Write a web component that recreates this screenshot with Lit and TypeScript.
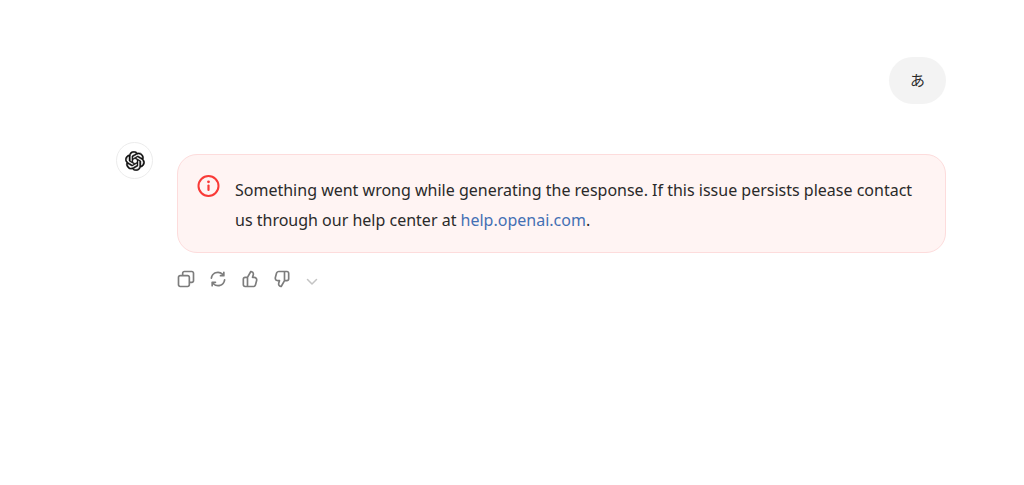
import { LitElement, html, css, svg } from "lit";
import { customElement } from "lit/decorators.js";

const LOGO =
  "M37.532 16.87a9.963 9.963 0 0 0-.856-8.184 10.078 10.078 0 0 0-10.855-4.835A9.964 9.964 0 0 0 18.306.5a10.079 10.079 0 0 0-9.614 6.977 9.967 9.967 0 0 0-6.664 4.834 10.08 10.08 0 0 0 1.24 11.817 9.965 9.965 0 0 0 .856 8.185 10.079 10.079 0 0 0 10.855 4.835 9.965 9.965 0 0 0 7.516 3.35 10.078 10.078 0 0 0 9.617-6.981 9.967 9.967 0 0 0 6.663-4.834 10.079 10.079 0 0 0-1.243-11.813ZM22.498 37.886a7.474 7.474 0 0 1-4.799-1.735c.061-.033.168-.091.237-.134l7.964-4.6a1.294 1.294 0 0 0 .655-1.134V19.054l3.366 1.944a.12.12 0 0 1 .066.092v9.299a7.505 7.505 0 0 1-7.49 7.496ZM6.392 31.006a7.471 7.471 0 0 1-.894-5.023c.06.036.162.099.237.141l7.964 4.6a1.297 1.297 0 0 0 1.308 0l9.724-5.614v3.888a.12.12 0 0 1-.048.103l-8.051 4.649a7.504 7.504 0 0 1-10.24-2.744ZM4.297 13.62A7.469 7.469 0 0 1 8.2 10.333c0 .068-.004.19-.004.274v9.201a1.294 1.294 0 0 0 .654 1.132l9.723 5.614-3.366 1.944a.12.12 0 0 1-.114.01L7.04 23.856a7.504 7.504 0 0 1-2.743-10.237Zm27.658 6.437-9.724-5.615 3.367-1.943a.121.121 0 0 1 .113-.01l8.052 4.648a7.498 7.498 0 0 1-1.158 13.528v-9.476a1.293 1.293 0 0 0-.65-1.132Zm3.35-5.043c-.059-.037-.162-.099-.236-.141l-7.965-4.6a1.298 1.298 0 0 0-1.308 0l-9.723 5.614v-3.888a.12.12 0 0 1 .048-.103l8.05-4.645a7.497 7.497 0 0 1 11.135 7.763Zm-21.063 6.929-3.367-1.944a.12.12 0 0 1-.065-.092v-9.299a7.497 7.497 0 0 1 12.293-5.756 6.94 6.94 0 0 0-.236.134l-7.965 4.6a1.294 1.294 0 0 0-.654 1.132l-.006 11.225Zm1.829-3.943 4.33-2.501 4.332 2.5v5l-4.331 2.5-4.331-2.5V18Z";

const COPY =
  "M7 5C7 3.343 8.343 2 10 2H19C20.657 2 22 3.343 22 5V14C22 15.657 20.657 17 19 17H17V19C17 20.657 15.657 22 14 22H5C3.343 22 2 20.657 2 19V10C2 8.343 3.343 7 5 7H7V5ZM9 7H14C15.657 7 17 8.343 17 10V15H19C19.552 15 20 14.552 20 14V5C20 4.448 19.552 4 19 4H10C9.448 4 9 4.448 9 5V7ZM5 9C4.448 9 4 9.448 4 10V19C4 19.552 4.448 20 5 20H14C14.552 20 15 19.552 15 19V10C15 9.448 14.552 9 14 9H5Z";
const REFRESH =
  "M3.07 10.876C3.623 6.436 7.41 3 12 3a9.1 9.1 0 0 1 6.012 2.254V4a1 1 0 1 1 2 0v4a1 1 0 0 1-1 1H15a1 1 0 1 1 0-2h1.957A7.1 7.1 0 0 0 12 5a7 7 0 0 0-6.946 6.124 1 1 0 1 1-1.984-.248Zm16.992 1.132a1 1 0 0 1 .868 1.116C20.377 17.564 16.59 21 12 21a9.1 9.1 0 0 1-6-2.254V20a1 1 0 1 1-2 0v-4a1 1 0 0 1 1-1h4a1 1 0 1 1 0 2H7.043A7.1 7.1 0 0 0 12 19a7 7 0 0 0 6.946-6.124 1 1 0 0 1 1.116-.868Z";
const THUMB =
  "M12.132 2.504C12.332 2.153 12.724 1.958 13.124 2.008L13.578 2.064C16.045 2.373 17.636 4.834 16.905 7.21L16.354 9H17.072C19.71 9 21.625 11.508 20.931 14.053L19.568 19.053C19.093 20.793 17.512 22 15.709 22H6C4.343 22 3 20.657 3 19V12C3 10.343 4.343 9 6 9H8.42L12.132 2.504ZM10 20H15.709C16.611 20 17.401 19.396 17.638 18.526L19.002 13.526C19.349 12.254 18.391 11 17.072 11H15C14.683 11 14.384 10.849 14.196 10.594C14.007 10.339 13.951 10.009 14.044 9.706L14.993 6.622C15.338 5.5 14.648 4.34 13.532 4.085L10 10.266V20ZM8 11V20H6C5.448 20 5 19.552 5 19V12C5 11.448 5.448 11 6 11H8Z";

const actions = [
  { label: "Copy", icon: svg`<path fill-rule="evenodd" d=${COPY} />` },
  { label: "Regenerate", icon: svg`<path d=${REFRESH} />` },
  { label: "Good response", icon: svg`<path fill-rule="evenodd" d=${THUMB} />` },
  {
    label: "Bad response",
    icon: svg`<path fill-rule="evenodd" transform="rotate(180 12 12)" d=${THUMB} />`,
  },
];

@customElement("app-root")
export class AppRoot extends LitElement {
  static styles = css`
    :host {
      display: block;
      min-height: 100vh;
      box-sizing: border-box;
      padding: 57px 78px 40px 116px;
      background: #fff;
      color: #2a2a2a;
      font-family: "Segoe UI", "Noto Sans", "Noto Sans CJK JP", sans-serif;
      font-size: 16px;
      line-height: 30px;
    }
    svg {
      display: block;
      fill: currentColor;
    }
    .thread {
      display: flex;
      flex-direction: column;
      gap: 38px;
    }
    .bubble {
      align-self: flex-end;
      padding: 8px 21px 9px;
      border-radius: 24px;
      background: #f3f3f3;
      font-family: "Noto Sans CJK JP", sans-serif;
      font-size: 15px;
    }
    .reply {
      display: flex;
      align-items: flex-start;
      gap: 24px;
    }
    .avatar {
      display: grid;
      place-items: center;
      flex: none;
      box-sizing: border-box;
      width: 37px;
      height: 37px;
      border: 1px solid #ececec;
      border-radius: 50%;
      color: #0d0d0d;
    }
    .logo {
      stroke: currentColor;
      stroke-width: 1;
    }
    .content {
      flex: 1;
      min-width: 0;
      padding-top: 12px;
    }
    .error {
      display: flex;
      align-items: flex-start;
      gap: 14px;
      padding: 19px 19px 17px;
      border: 1px solid #fddcdc;
      border-radius: 20px;
      background: #fff4f3;
    }
    .info {
      flex: none;
      color: #f93a37;
    }
    .message {
      margin: 0;
      padding-top: 1px;
    }
    .link {
      color: #4470b4;
      text-decoration: none;
    }
    .actions {
      display: flex;
      align-items: center;
      margin-top: 10px;
    }
    .action {
      display: grid;
      place-items: center;
      width: 32px;
      height: 32px;
      margin: 0;
      padding: 0;
      border: 0;
      border-radius: 8px;
      background: none;
      color: #7d7d7d;
      cursor: pointer;
    }
    .actions .action:first-child {
      margin-left: -7px;
    }
    .actions .more {
      width: 28px;
      padding-top: 6px;
      color: #c4c4c4;
    }
    .stroke {
      fill: none;
      stroke: currentColor;
      stroke-linecap: round;
      stroke-linejoin: round;
    }
  `;

  render() {
    return html`
      <main class="thread">
        <div class="bubble" lang="ja">あ</div>
        <article class="reply">
          <div class="avatar">
            <svg class="logo" width="20" height="20" viewBox="0 0 41 41" aria-hidden="true">
              <path d=${LOGO} />
            </svg>
          </div>
          <div class="content">
            <div class="error" role="alert">
              <svg class="info stroke" width="24" height="24" viewBox="0 0 24 24" aria-hidden="true">
                <circle cx="11.500" cy="12" r="10" stroke-width="2" />
                <path d="M11.500 11.500v4.500" stroke-width="2.200" />
                <circle cx="11.500" cy="7.800" r="1.400" fill="currentColor" stroke="none" />
              </svg>
              <p class="message">
                Something went wrong while generating the response. If this issue persists please
                contact us through our help center at
                <a class="link" href="https://help.openai.com">help.openai.com</a>.
              </p>
            </div>
            <div class="actions">
              ${actions.map(
                (a) => html`
                  <button class="action" type="button" aria-label=${a.label}>
                    <svg width="20" height="20" viewBox="0 0 24 24" aria-hidden="true">${a.icon}</svg>
                  </button>
                `
              )}
              <button class="action more" type="button" aria-label="Change model">
                <svg class="stroke" width="12" height="12" viewBox="0 0 12 12" aria-hidden="true">
                  <path d="M1.5 3.5 6 8l4.5-4.5" stroke-width="1.5" />
                </svg>
              </button>
            </div>
          </div>
        </article>
      </main>
    `;
  }
}
